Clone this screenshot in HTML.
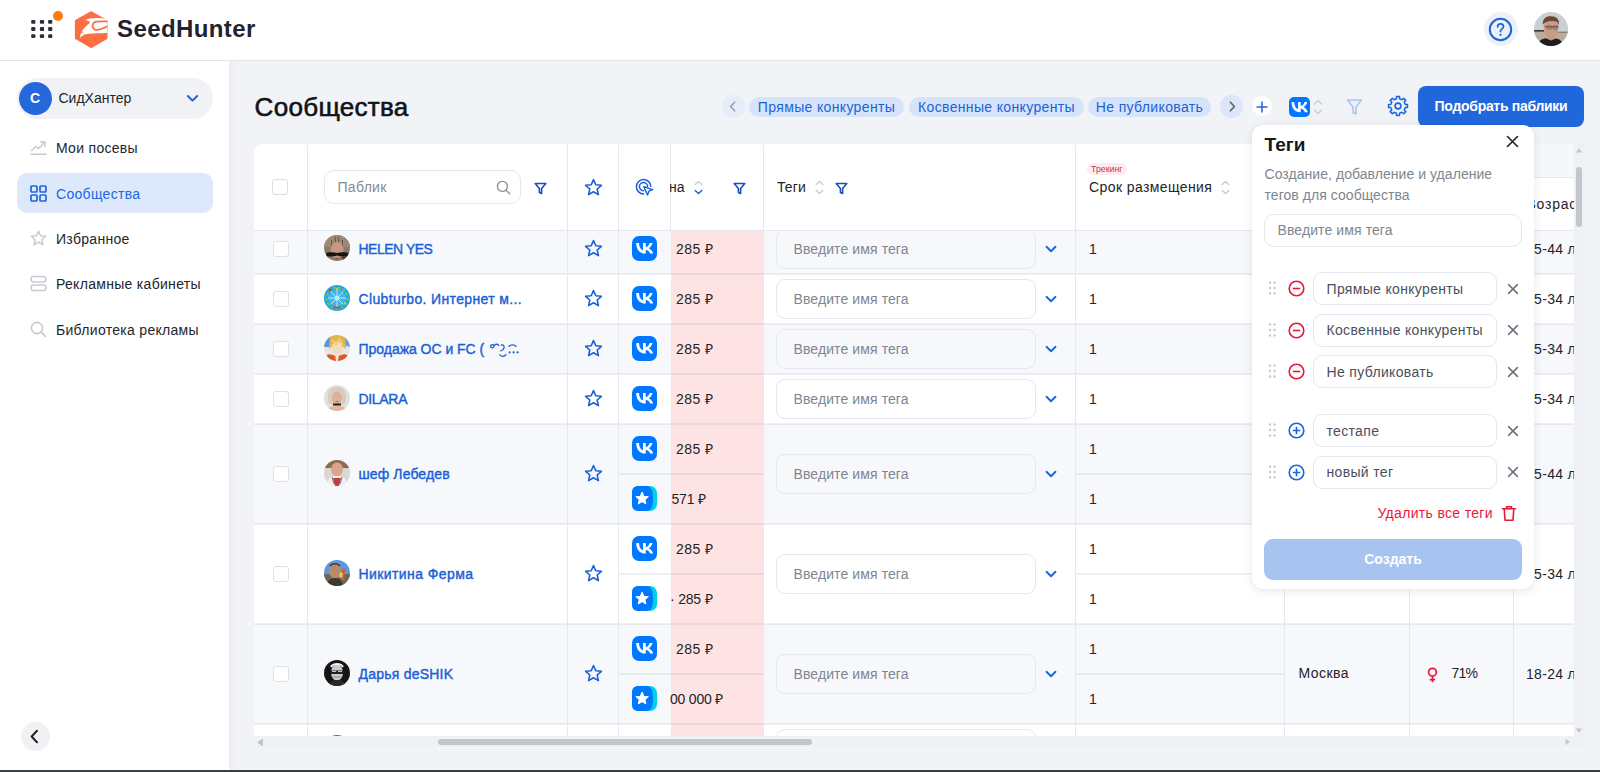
<!DOCTYPE html>
<html><head><meta charset="utf-8">
<style>
*{box-sizing:border-box;margin:0;padding:0}
html,body{width:1600px;height:772px;overflow:hidden;background:#fff}
body{position:relative;font-family:"Liberation Sans",sans-serif;font-size:14px;color:#1f2329}
.a{position:absolute}
.t{position:absolute;white-space:nowrap;line-height:16px}
svg{display:block}
#hdr{left:0;top:0;width:1600px;height:61px;background:#fff;border-bottom:1px solid #e1e5eb}
#side{left:0;top:61px;width:229px;height:709px;background:#fff}
#main{left:229px;top:61px;width:1371px;height:709px;background:#f2f3f7}
#bot{left:0;top:770px;width:1600px;height:2px;background:#3b3e43}
.nav{position:absolute;left:17px;width:196px;height:40px;border-radius:10px}
.nav .ic{position:absolute;left:13px;top:12px;width:17px;height:17px}
.nav .tx{position:absolute;left:39px;top:12.7px;line-height:16px;white-space:nowrap;font-size:14px;color:#22262c;letter-spacing:0.3px}
.chip{position:absolute;top:97px;height:20px;border-radius:10px;background:#d5e4fb;color:#1c62d6;font-size:14px;line-height:20px;text-align:center;letter-spacing:0.35px;white-space:nowrap}
</style></head><body>

<!-- HEADER -->
<div id="hdr" class="a">
  <svg class="a" style="left:30px;top:19px" width="24" height="20" viewBox="0 0 24 20">
    <g fill="#2b303b">
      <rect x="1.2" y="1" width="4.2" height="3.8" rx="1"/><rect x="9.9" y="1" width="4.2" height="3.8" rx="1"/><rect x="18.1" y="1" width="4.2" height="3.8" rx="1"/>
      <rect x="1.2" y="8.1" width="4.2" height="3.8" rx="1"/><rect x="9.9" y="8.1" width="4.2" height="3.8" rx="1"/><rect x="18.1" y="8.1" width="4.2" height="3.8" rx="1"/>
      <rect x="1.2" y="15.2" width="4.2" height="3.8" rx="1"/><rect x="9.9" y="15.2" width="4.2" height="3.8" rx="1"/><rect x="18.1" y="15.2" width="4.2" height="3.8" rx="1"/>
    </g>
  </svg>
  <div class="a" style="left:52.5px;top:11px;width:10px;height:10px;border-radius:50%;background:#ff7b0a"></div>
  <svg class="a" style="left:74px;top:10px" width="35" height="39" viewBox="0 0 35 39">
    <path d="M17.2 1.9 L32.7 10.6 L32.7 28.2 L17.2 37.3 L1.7 28.2 L1.7 10.6 Z" fill="#fd6e43" stroke="#fd6e43" stroke-width="1.6" stroke-linejoin="round"/>
    <path d="M6 27.8 C6.3 23 9 18.5 16 12.8 L15 11.2 L11.2 10 C15 8 22 7.2 32.4 8.8 L33.3 9.8 L33.3 23 C26 23.2 18 23.2 13 24 C10 24.6 7.5 26 6 27.8 Z" fill="#fff"/>
    <path d="M33.3 11.4 C28 11.3 23.5 11.4 21.9 11.7 C18 13 17.5 17.5 20.8 19.6 C23.5 20.5 28 19 33.3 16.2" fill="none" stroke="#fd6e43" stroke-width="1.8"/>
    <circle cx="8.2" cy="22.3" r="0.7" fill="#fd6e43"/>
  </svg>
  <div class="t" style="left:117px;top:15px;font-size:24px;line-height:28px;font-weight:700;color:#1f2430;letter-spacing:0.4px">SeedHunter</div>

  <div class="a" style="left:1483.5px;top:12px;width:34px;height:34px;border-radius:50%;background:#edf1f7"></div>
  <svg class="a" style="left:1488px;top:17px" width="25" height="25" viewBox="0 0 25 25">
    <circle cx="12.5" cy="12.5" r="10.7" fill="none" stroke="#1a66e0" stroke-width="2"/>
    <path d="M9.6 9.9 C9.6 8.1 10.9 6.9 12.6 6.9 C14.3 6.9 15.5 8.1 15.5 9.6 C15.5 11.3 14.2 11.8 13.3 12.5 C12.7 13 12.5 13.5 12.5 14.6" fill="none" stroke="#1a66e0" stroke-width="1.7" stroke-linecap="round"/>
    <circle cx="12.5" cy="17.8" r="1.15" fill="#1a66e0"/>
  </svg>
  <svg class="a" style="left:1533.5px;top:12px" width="34" height="34" viewBox="0 0 34 34"><defs><clipPath id="hav"><circle cx="17" cy="17" r="17"/></clipPath></defs><g clip-path="url(#hav)">
    <rect width="34" height="34" fill="#c9d0d3"/><rect y="19" width="34" height="15" fill="#b9ad9c"/><rect y="18" width="10" height="1.6" fill="#3a3a36"/><rect x="22" y="20" width="12" height="1" fill="#8e867a"/>
    <path d="M11 26 H22 V30 H11 Z" fill="#c29580"/>
    <path d="M9.5 12 C9 6 13 4.5 17 4.6 C22 4.6 25 7 24.6 12 L24 18 C23.5 24 20.5 26.5 17 26.5 C13 26.5 10.5 23 10 18 Z" fill="#c99c86"/>
    <path d="M8.8 12.5 C8.5 6.5 12 4 17 4.2 C22.5 4.4 25.5 7 25 13 C24 9.5 21 8.8 17.5 9 C13.5 9.2 10.5 10 8.8 12.5 Z" fill="#6a4a36"/>
    <path d="M11 14.8 H24.5" stroke="#5a4a48" stroke-width="0.9"/><rect x="13" y="14" width="4.5" height="3" rx="1" fill="none" stroke="#5a4a48" stroke-width="0.7"/><rect x="19" y="14" width="4.5" height="3" rx="1" fill="none" stroke="#5a4a48" stroke-width="0.7"/>
    <path d="M3 34 C4 29 8 26.5 12 26.5 L17 28.5 L22 26.5 C26 27 28 29 29 34 Z" fill="#1e1f1e"/>
  </g></svg>
</div>

<!-- SIDEBAR -->
<div id="side" class="a">
  <div class="a" style="left:17px;top:17px;width:196px;height:41px;border-radius:21px;background:#f1f2f6"></div>
  <div class="a" style="left:18.5px;top:20.5px;width:33px;height:33px;border-radius:50%;background:#2468dc;color:#fff;font-weight:700;font-size:14px;line-height:33px;text-align:center">C</div>
  <div class="t" style="left:58.5px;top:29px;font-size:14px;color:#22262c">СидХантер</div>
  <svg class="a" style="left:186px;top:33px" width="13" height="9" viewBox="0 0 13 9"><path d="M1.8 2 L6.5 6.6 L11.2 2" fill="none" stroke="#1a66e0" stroke-width="2" stroke-linecap="round" stroke-linejoin="round"/></svg>

  <div class="nav" style="top:66px">
    <svg class="ic" viewBox="0 0 17 17"><path d="M1.5 11.5 L6 7.5 L8.5 9.5 L14.5 3.5 M10.5 3 L15 3 L15 7.5" fill="none" stroke="#c7cad0" stroke-width="1.5" stroke-linecap="round" stroke-linejoin="round"/><path d="M0.8 15.2 H16" stroke="#c7cad0" stroke-width="1.6" stroke-linecap="round"/></svg>
    <div class="tx">Мои посевы</div>
  </div>
  <div class="nav" style="top:112px;background:#dde9fb">
    <svg class="ic" viewBox="0 0 17 17"><g fill="none" stroke="#1f66dc" stroke-width="1.7"><rect x="1" y="1" width="6" height="6" rx="1"/><rect x="10" y="1" width="6" height="6" rx="1"/><rect x="1" y="10" width="6" height="6" rx="1"/><rect x="10" y="10" width="6" height="6" rx="1"/></g></svg>
    <div class="tx" style="color:#2268de">Сообщества</div>
  </div>
  <div class="nav" style="top:157px">
    <svg class="ic" viewBox="0 0 17 17"><path d="M8.5 1.2 L10.6 5.8 L15.6 6.3 L11.9 9.7 L12.9 14.8 L8.5 12.2 L4.1 14.8 L5.1 9.7 L1.4 6.3 L6.4 5.8 Z" fill="none" stroke="#c7cad0" stroke-width="1.5" stroke-linejoin="round"/></svg>
    <div class="tx">Избранное</div>
  </div>
  <div class="nav" style="top:202px">
    <svg class="ic" viewBox="0 0 17 17"><g fill="none" stroke="#c7cad0" stroke-width="1.6"><rect x="1.2" y="1.5" width="14.6" height="5.5" rx="2.2"/><rect x="1.2" y="10" width="14.6" height="5.5" rx="2.2"/></g></svg>
    <div class="tx">Рекламные кабинеты</div>
  </div>
  <div class="nav" style="top:248px">
    <svg class="ic" viewBox="0 0 17 17"><circle cx="7" cy="7" r="5.6" fill="none" stroke="#c7cad0" stroke-width="1.6"/><path d="M11.2 11.2 L15.5 15.5" stroke="#c7cad0" stroke-width="1.7" stroke-linecap="round"/></svg>
    <div class="tx">Библиотека рекламы</div>
  </div>

  <div class="a" style="left:21px;top:661px;width:29px;height:29px;border-radius:50%;background:#f1f1f3"></div>
  <svg class="a" style="left:28px;top:668px" width="14" height="15" viewBox="0 0 14 15"><path d="M9 1.8 L3.6 7.5 L9 13.2" fill="none" stroke="#1f2329" stroke-width="2" stroke-linecap="round" stroke-linejoin="round"/></svg>
</div>

<!-- MAIN -->
<div id="main" class="a">
  <div class="a" style="left:0;top:0;width:9px;height:709px;background:linear-gradient(90deg,rgba(0,0,0,0.025),rgba(0,0,0,0))"></div>
</div>
<div class="t" style="left:254.6px;top:92px;font-size:26px;line-height:30px;color:#111418;-webkit-text-stroke:0.6px #111418;letter-spacing:0.3px">Сообщества</div>

<!-- TOOLBAR -->
<div class="a" style="left:721.5px;top:95px;width:23px;height:23px;border-radius:50%;background:#e6edf8"></div>
<svg class="a" style="left:727px;top:100px" width="12" height="13" viewBox="0 0 12 13"><path d="M7.6 2.2 L3.6 6.5 L7.6 10.8" fill="none" stroke="#9aa1ab" stroke-width="1.6" stroke-linecap="round" stroke-linejoin="round"/></svg>
<div class="chip" style="left:749px;width:155px">Прямые конкуренты</div>
<div class="chip" style="left:909px;width:175px">Косвенные конкуренты</div>
<div class="chip" style="left:1088px;width:123px">Не публиковать</div>
<div class="a" style="left:1220px;top:95px;width:23px;height:23px;border-radius:50%;background:#dbe6f8"></div>
<svg class="a" style="left:1225.7px;top:100px" width="12" height="13" viewBox="0 0 12 13"><path d="M4.4 2.2 L8.4 6.5 L4.4 10.8" fill="none" stroke="#5b6068" stroke-width="1.6" stroke-linecap="round" stroke-linejoin="round"/></svg>
<div class="a" style="left:1252px;top:96px;width:20px;height:20px;border-radius:50%;background:#fff"></div>
<svg class="a" style="left:1256px;top:100.5px" width="12" height="12" viewBox="0 0 12 12"><path d="M6 1.1 V10.9 M1.1 6 H10.9" stroke="#1a66e0" stroke-width="1.5" stroke-linecap="round"/></svg>
<svg class="a" style="left:1289px;top:97px" width="21" height="20" viewBox="0 0 21 20"><rect width="21" height="20" rx="5" fill="#0077ff"/><path transform="translate(-1.5,-2) scale(1)" d="M12.9 17.2c-5.6 0-8.8-3.8-8.9-10.2h2.8c.1 4.7 2.2 6.7 3.8 7.1V7h2.6v4c1.6-.2 3.3-2 3.9-4h2.6c-.4 2.5-2.3 4.3-3.6 5.1 1.3.6 3.4 2.2 4.2 5.1h-2.9c-.6-1.9-2.2-3.4-4.2-3.6v3.6h-.3z" fill="#fff"/></svg>
<svg class="a" style="left:1313px;top:99px" width="10" height="16" viewBox="0 0 10 16"><path d="M1.5 5 L5 1.5 L8.5 5 M1.5 11 L5 14.5 L8.5 11" fill="none" stroke="#c8ccd2" stroke-width="1.4" stroke-linecap="round" stroke-linejoin="round"/></svg>
<svg class="a" style="left:1346px;top:98px" width="17" height="18" viewBox="0 0 17 18"><path d="M1.5 2 H15.5 L10 9 V16 L7 14.8 V9 Z" fill="none" stroke="#a8c5f2" stroke-width="1.6" stroke-linejoin="round"/></svg>
<svg class="a" style="left:1387px;top:95px" width="22" height="22" viewBox="0 0 22 22"><path d="M18.24 9.46 L20.48 9.50 L20.48 12.50 L18.24 12.54 L17.21 15.03 L18.77 16.64 L16.64 18.77 L15.03 17.21 L12.54 18.24 L12.50 20.48 L9.50 20.48 L9.46 18.24 L6.97 17.21 L5.36 18.77 L3.23 16.64 L4.79 15.03 L3.76 12.54 L1.52 12.50 L1.52 9.50 L3.76 9.46 L4.79 6.97 L3.23 5.36 L5.36 3.23 L6.97 4.79 L9.46 3.76 L9.50 1.52 L12.50 1.52 L12.54 3.76 L15.03 4.79 L16.64 3.23 L18.77 5.36 L17.21 6.97 Z" fill="none" stroke="#1a66e0" stroke-width="1.5" stroke-linejoin="round"/><circle cx="11" cy="11" r="2.9" fill="none" stroke="#1a66e0" stroke-width="1.6"/></svg>
<div class="a" style="left:1418px;top:86px;width:166px;height:41px;border-radius:8px;background:#2167dc;color:#fff;font-weight:700;font-size:14px;line-height:41px;text-align:center;letter-spacing:-0.3px">Подобрать паблики</div>

<div class="a" style="left:254px;top:144px;width:1320px;height:592px;overflow:hidden;border-radius:10px 0 0 0;background:#fff">
<div class="a" style="left:-254px;top:-144px;width:1600px;height:772px">
<div class="a" style="left:254px;top:224px;width:1320px;height:50px;background:#f7f8fb"></div>
<div class="a" style="left:671px;top:224px;width:92px;height:50px;background:#fde3e3"></div>
<div class="a" style="left:273px;top:240.5px;width:16px;height:16px;border:1.5px solid #dce1e8;border-radius:3px;background:#fff"></div>
<svg class="a" style="left:324px;top:235.0px" width="26" height="26" viewBox="0 0 26 26"><defs><clipPath id="c0"><circle cx="13" cy="13" r="13"/></clipPath></defs><g clip-path="url(#c0)"><rect width="26" height="26" fill="#8f7a66"/><path d="M0 0 H26 V12 H0 Z" fill="#9c8a76"/><path d="M11.3 2 V10 M14.7 2 V10 M7.5 5 V13 M18.5 5 V13" stroke="#5e4d3e" stroke-width="0.9"/><ellipse cx="13" cy="15" rx="6.5" ry="8" fill="#c49a80"/><path d="M2 18 C6 16.5 10 17.5 13 18 C16 17.5 20 16.5 25 18 L24 21 C20 22 17 21.5 13 20.5 C9 21.5 6 22 2.5 21 Z" fill="#151515"/><ellipse cx="13" cy="23.5" rx="1.6" ry="0.8" fill="#9a4a50"/><path d="M18 22 L26 20 V26 H19 Z" fill="#3a3a30"/><path d="M20 24 L24 22 V26 H20 Z" fill="#d6a92a"/><path d="M0 20 L4 22 L3 26 H0 Z" fill="#4a3528"/></g></svg>
<div class="t" style="left:358.5px;top:240.7px;font-size:14px;color:#1a5fd6;font-weight:400;letter-spacing:-0.49px;-webkit-text-stroke:0.4px #1a5fd6">HELEN YES</div>
<svg class="a" style="left:584px;top:239.2px" width="19" height="19" viewBox="0 0 19 19"><path d="M9.5 1.6 L11.8 6.8 L17.4 7.3 L13.2 11 L14.4 16.6 L9.5 13.7 L4.6 16.6 L5.8 11 L1.6 7.3 L7.2 6.8 Z" fill="none" stroke="#1a5fd6" stroke-width="1.6" stroke-linejoin="round"/></svg>
<svg class="a" style="left:632px;top:236.0px" width="25" height="25" viewBox="0 0 25 25"><rect width="25" height="25" rx="7" fill="#0077ff"/><path transform="translate(0.9,-0.5) scale(0.95)" d="M13.162 18.994c-6.098 0-9.57-4.172-9.714-11.114h3.047c.1 5.096 2.352 7.254 4.13 7.7V7.88h2.888v4.395c1.76-.19 3.598-2.192 4.221-4.395h2.888c-.48 2.717-2.49 4.718-3.921 5.54 1.43.665 3.72 2.408 4.591 5.574h-3.178c-.68-2.118-2.375-3.757-4.601-3.98v3.98h-.351z" fill="#fff"/></svg>
<div class="t" style="left:676px;top:240.5px;font-size:14px;color:#1f2329;font-weight:400;letter-spacing:0.45px;">285 ₽</div>
<div class="t" style="left:1089px;top:240.5px;font-size:14px;color:#1f2329;font-weight:400;letter-spacing:0px;">1</div>
<div class="a" style="left:776px;top:228.5px;width:260px;height:40px;border:1px solid #e3e7ee;border-radius:9px;background:#f7f8fb"></div>
<div class="t" style="left:793.5px;top:240.5px;font-size:14px;color:#80868f;font-weight:400;letter-spacing:0.1px;">Введите имя тега</div>
<svg class="a" style="left:1045px;top:244.5px" width="12" height="8" viewBox="0 0 12 8"><path d="M1.5 1.8 L6 6.2 L10.5 1.8" fill="none" stroke="#1a66e0" stroke-width="1.9" stroke-linecap="round" stroke-linejoin="round"/></svg>
<div class="t" style="left:1534.1px;top:240.5px;font-size:14px;color:#1f2329;font-weight:400;letter-spacing:0.3px;">5-44 л</div>
<div class="a" style="left:254px;top:274px;width:1320px;height:50px;background:#fff"></div>
<div class="a" style="left:671px;top:274px;width:92px;height:50px;background:#fde3e3"></div>
<div class="a" style="left:273px;top:290.5px;width:16px;height:16px;border:1.5px solid #dce1e8;border-radius:3px;background:#fff"></div>
<svg class="a" style="left:324px;top:285.0px" width="26" height="26" viewBox="0 0 26 26"><defs><clipPath id="c1"><circle cx="13" cy="13" r="13"/></clipPath></defs><g clip-path="url(#c1)"><rect width="26" height="26" fill="#1fa4ea"/><circle cx="13" cy="13" r="10.5" fill="none" stroke="#69c85a" stroke-width="2.2" stroke-dasharray="3 2"/><circle cx="13" cy="13" r="9" fill="#3cb8f0"/><g stroke="#bfefff" stroke-width="0.9"><path d="M13 4 V22 M4 13 H22 M6.6 6.6 L19.4 19.4 M19.4 6.6 L6.6 19.4"/></g><circle cx="13" cy="13" r="2" fill="none" stroke="#d8f7ff" stroke-width="1"/><circle cx="6" cy="5" r="1.3" fill="#d9302a"/><path d="M9 21.5 C11 23 15 23 17 22" stroke="#e5442a" stroke-width="1.8" fill="none"/><circle cx="21" cy="18" r="1" fill="#e6c74a"/><circle cx="13" cy="3.5" r="0.9" fill="#e6c74a"/></g></svg>
<div class="t" style="left:358.5px;top:290.7px;font-size:14px;color:#1a5fd6;font-weight:400;letter-spacing:0.37px;-webkit-text-stroke:0.4px #1a5fd6">Clubturbo. Интернет м...</div>
<svg class="a" style="left:584px;top:289.2px" width="19" height="19" viewBox="0 0 19 19"><path d="M9.5 1.6 L11.8 6.8 L17.4 7.3 L13.2 11 L14.4 16.6 L9.5 13.7 L4.6 16.6 L5.8 11 L1.6 7.3 L7.2 6.8 Z" fill="none" stroke="#1a5fd6" stroke-width="1.6" stroke-linejoin="round"/></svg>
<svg class="a" style="left:632px;top:286.0px" width="25" height="25" viewBox="0 0 25 25"><rect width="25" height="25" rx="7" fill="#0077ff"/><path transform="translate(0.9,-0.5) scale(0.95)" d="M13.162 18.994c-6.098 0-9.57-4.172-9.714-11.114h3.047c.1 5.096 2.352 7.254 4.13 7.7V7.88h2.888v4.395c1.76-.19 3.598-2.192 4.221-4.395h2.888c-.48 2.717-2.49 4.718-3.921 5.54 1.43.665 3.72 2.408 4.591 5.574h-3.178c-.68-2.118-2.375-3.757-4.601-3.98v3.98h-.351z" fill="#fff"/></svg>
<div class="t" style="left:676px;top:290.5px;font-size:14px;color:#1f2329;font-weight:400;letter-spacing:0.45px;">285 ₽</div>
<div class="t" style="left:1089px;top:290.5px;font-size:14px;color:#1f2329;font-weight:400;letter-spacing:0px;">1</div>
<div class="a" style="left:776px;top:278.5px;width:260px;height:40px;border:1px solid #e3e7ee;border-radius:9px;background:#fff"></div>
<div class="t" style="left:793.5px;top:290.5px;font-size:14px;color:#80868f;font-weight:400;letter-spacing:0.1px;">Введите имя тега</div>
<svg class="a" style="left:1045px;top:294.5px" width="12" height="8" viewBox="0 0 12 8"><path d="M1.5 1.8 L6 6.2 L10.5 1.8" fill="none" stroke="#1a66e0" stroke-width="1.9" stroke-linecap="round" stroke-linejoin="round"/></svg>
<div class="t" style="left:1534.1px;top:290.5px;font-size:14px;color:#1f2329;font-weight:400;letter-spacing:0.3px;">5-34 л</div>
<div class="a" style="left:254px;top:324px;width:1320px;height:50px;background:#f7f8fb"></div>
<div class="a" style="left:671px;top:324px;width:92px;height:50px;background:#fde3e3"></div>
<div class="a" style="left:273px;top:340.5px;width:16px;height:16px;border:1.5px solid #dce1e8;border-radius:3px;background:#fff"></div>
<svg class="a" style="left:324px;top:335.0px" width="26" height="26" viewBox="0 0 26 26"><defs><clipPath id="c2"><circle cx="13" cy="13" r="13"/></clipPath></defs><g clip-path="url(#c2)"><rect width="26" height="26" fill="#e8e6e0"/><path d="M0 0 H8 L6 12 H0 Z" fill="#5a93d8"/><path d="M18 0 H26 V12 L20 10 Z" fill="#6aa0dc"/><path d="M6 2 C9 -1 18 -1 21 3 L22 14 C19 10 8 10 5 14 Z" fill="#e3b550"/><ellipse cx="13" cy="13" rx="5.5" ry="6.5" fill="#f0dcc0"/><path d="M8 5 L12 10 L15 4 L19 10" stroke="#f2cf6a" stroke-width="1.6" fill="none"/><path d="M3 20 C6 18 9 21 13 21 C17 21 20 18 23 20 L26 26 H0 Z" fill="#dd5a28"/><path d="M11 19 H15 L14 26 H12 Z" fill="#efe6d8"/></g></svg>
<div class="t" style="left:358.5px;top:340.7px;font-size:14px;color:#1a5fd6;font-weight:400;letter-spacing:-0.03px;-webkit-text-stroke:0.4px #1a5fd6">Продажа ОС и FC (</div>
<svg class="a" style="left:486px;top:340.5px" width="40" height="18" viewBox="0 0 40 18"><g fill="none" stroke="#1a5fd6" stroke-width="1.3" stroke-linecap="round"><circle cx="6.3" cy="5.2" r="1.6"/><path d="M8.5 4.2 C10 2.8 11.5 3 13 4.4"/><path d="M15.5 4 C17.5 3.6 18.5 5 18 7 C17.6 8.6 16.2 9.5 14.8 10"/><path d="M13.8 13.8 C15.5 15.8 18.5 15.8 20 13.6"/><path d="M23 5.4 C24.5 3.3 28.5 3.3 30 5.4"/></g><g fill="#1a5fd6"><circle cx="23.6" cy="11.3" r="1.1"/><circle cx="27.6" cy="11.3" r="1.1"/><circle cx="31.6" cy="11.3" r="1.1"/></g></svg>
<svg class="a" style="left:584px;top:339.2px" width="19" height="19" viewBox="0 0 19 19"><path d="M9.5 1.6 L11.8 6.8 L17.4 7.3 L13.2 11 L14.4 16.6 L9.5 13.7 L4.6 16.6 L5.8 11 L1.6 7.3 L7.2 6.8 Z" fill="none" stroke="#1a5fd6" stroke-width="1.6" stroke-linejoin="round"/></svg>
<svg class="a" style="left:632px;top:336.0px" width="25" height="25" viewBox="0 0 25 25"><rect width="25" height="25" rx="7" fill="#0077ff"/><path transform="translate(0.9,-0.5) scale(0.95)" d="M13.162 18.994c-6.098 0-9.57-4.172-9.714-11.114h3.047c.1 5.096 2.352 7.254 4.13 7.7V7.88h2.888v4.395c1.76-.19 3.598-2.192 4.221-4.395h2.888c-.48 2.717-2.49 4.718-3.921 5.54 1.43.665 3.72 2.408 4.591 5.574h-3.178c-.68-2.118-2.375-3.757-4.601-3.98v3.98h-.351z" fill="#fff"/></svg>
<div class="t" style="left:676px;top:340.5px;font-size:14px;color:#1f2329;font-weight:400;letter-spacing:0.45px;">285 ₽</div>
<div class="t" style="left:1089px;top:340.5px;font-size:14px;color:#1f2329;font-weight:400;letter-spacing:0px;">1</div>
<div class="a" style="left:776px;top:328.5px;width:260px;height:40px;border:1px solid #e3e7ee;border-radius:9px;background:#f7f8fb"></div>
<div class="t" style="left:793.5px;top:340.5px;font-size:14px;color:#80868f;font-weight:400;letter-spacing:0.1px;">Введите имя тега</div>
<svg class="a" style="left:1045px;top:344.5px" width="12" height="8" viewBox="0 0 12 8"><path d="M1.5 1.8 L6 6.2 L10.5 1.8" fill="none" stroke="#1a66e0" stroke-width="1.9" stroke-linecap="round" stroke-linejoin="round"/></svg>
<div class="t" style="left:1534.1px;top:340.5px;font-size:14px;color:#1f2329;font-weight:400;letter-spacing:0.3px;">5-34 л</div>
<div class="a" style="left:254px;top:374px;width:1320px;height:50px;background:#fff"></div>
<div class="a" style="left:671px;top:374px;width:92px;height:50px;background:#fde3e3"></div>
<div class="a" style="left:273px;top:390.5px;width:16px;height:16px;border:1.5px solid #dce1e8;border-radius:3px;background:#fff"></div>
<svg class="a" style="left:324px;top:385.0px" width="26" height="26" viewBox="0 0 26 26"><defs><clipPath id="c3"><circle cx="13" cy="13" r="13"/></clipPath></defs><g clip-path="url(#c3)"><rect width="26" height="26" fill="#e2e0de"/><path d="M4 14 C3 5 8 2 13 2 C18 2 23 5 22 14 L21 19 H5 Z" fill="#d9cbbf"/><ellipse cx="13" cy="13" rx="5" ry="6.5" fill="#dcb09c"/><path d="M11.5 16.5 H14.5" stroke="#b86a6a" stroke-width="1.1"/><path d="M9 19.5 H17" stroke="#1a1a1a" stroke-width="1.8"/><path d="M3 26 C4 22 8 21 13 21 C18 21 22 22 23 26 Z" fill="#e2b49e"/></g></svg>
<div class="t" style="left:358.5px;top:390.7px;font-size:14px;color:#1a5fd6;font-weight:400;letter-spacing:-0.32px;-webkit-text-stroke:0.4px #1a5fd6">DILARA</div>
<svg class="a" style="left:584px;top:389.2px" width="19" height="19" viewBox="0 0 19 19"><path d="M9.5 1.6 L11.8 6.8 L17.4 7.3 L13.2 11 L14.4 16.6 L9.5 13.7 L4.6 16.6 L5.8 11 L1.6 7.3 L7.2 6.8 Z" fill="none" stroke="#1a5fd6" stroke-width="1.6" stroke-linejoin="round"/></svg>
<svg class="a" style="left:632px;top:386.0px" width="25" height="25" viewBox="0 0 25 25"><rect width="25" height="25" rx="7" fill="#0077ff"/><path transform="translate(0.9,-0.5) scale(0.95)" d="M13.162 18.994c-6.098 0-9.57-4.172-9.714-11.114h3.047c.1 5.096 2.352 7.254 4.13 7.7V7.88h2.888v4.395c1.76-.19 3.598-2.192 4.221-4.395h2.888c-.48 2.717-2.49 4.718-3.921 5.54 1.43.665 3.72 2.408 4.591 5.574h-3.178c-.68-2.118-2.375-3.757-4.601-3.98v3.98h-.351z" fill="#fff"/></svg>
<div class="t" style="left:676px;top:390.5px;font-size:14px;color:#1f2329;font-weight:400;letter-spacing:0.45px;">285 ₽</div>
<div class="t" style="left:1089px;top:390.5px;font-size:14px;color:#1f2329;font-weight:400;letter-spacing:0px;">1</div>
<div class="a" style="left:776px;top:378.5px;width:260px;height:40px;border:1px solid #e3e7ee;border-radius:9px;background:#fff"></div>
<div class="t" style="left:793.5px;top:390.5px;font-size:14px;color:#80868f;font-weight:400;letter-spacing:0.1px;">Введите имя тега</div>
<svg class="a" style="left:1045px;top:394.5px" width="12" height="8" viewBox="0 0 12 8"><path d="M1.5 1.8 L6 6.2 L10.5 1.8" fill="none" stroke="#1a66e0" stroke-width="1.9" stroke-linecap="round" stroke-linejoin="round"/></svg>
<div class="t" style="left:1534.1px;top:390.5px;font-size:14px;color:#1f2329;font-weight:400;letter-spacing:0.3px;">5-34 л</div>
<div class="a" style="left:254px;top:424px;width:1320px;height:100px;background:#f7f8fb"></div>
<div class="a" style="left:671px;top:424px;width:92px;height:100px;background:#fde3e3"></div>
<div class="a" style="left:273px;top:465.5px;width:16px;height:16px;border:1.5px solid #dce1e8;border-radius:3px;background:#fff"></div>
<svg class="a" style="left:324px;top:460.0px" width="26" height="26" viewBox="0 0 26 26"><defs><clipPath id="c4"><circle cx="13" cy="13" r="13"/></clipPath></defs><g clip-path="url(#c4)"><rect width="26" height="26" fill="#d9d7d2"/><path d="M0 0 H26 V8 H0 Z" fill="#8a6d50"/><ellipse cx="13" cy="9.5" rx="6" ry="7" fill="#dba48c"/><path d="M3 26 C3 18 7 16 13 16 C19 16 23 18 23 26 Z" fill="#f1f0ee"/><path d="M9 18 L11 26 H15 L17 18 Z" fill="#c93b37"/><path d="M8 17 L10 24 M18 17 L16 24" stroke="#2a5a9a" stroke-width="0.8"/></g></svg>
<div class="t" style="left:358.5px;top:465.7px;font-size:14px;color:#1a5fd6;font-weight:400;letter-spacing:0.11px;-webkit-text-stroke:0.4px #1a5fd6">шеф Лебедев</div>
<svg class="a" style="left:584px;top:464.2px" width="19" height="19" viewBox="0 0 19 19"><path d="M9.5 1.6 L11.8 6.8 L17.4 7.3 L13.2 11 L14.4 16.6 L9.5 13.7 L4.6 16.6 L5.8 11 L1.6 7.3 L7.2 6.8 Z" fill="none" stroke="#1a5fd6" stroke-width="1.6" stroke-linejoin="round"/></svg>
<svg class="a" style="left:632px;top:436.0px" width="25" height="25" viewBox="0 0 25 25"><rect width="25" height="25" rx="7" fill="#0077ff"/><path transform="translate(0.9,-0.5) scale(0.95)" d="M13.162 18.994c-6.098 0-9.57-4.172-9.714-11.114h3.047c.1 5.096 2.352 7.254 4.13 7.7V7.88h2.888v4.395c1.76-.19 3.598-2.192 4.221-4.395h2.888c-.48 2.717-2.49 4.718-3.921 5.54 1.43.665 3.72 2.408 4.591 5.574h-3.178c-.68-2.118-2.375-3.757-4.601-3.98v3.98h-.351z" fill="#fff"/></svg>
<div class="t" style="left:676px;top:440.5px;font-size:14px;color:#1f2329;font-weight:400;letter-spacing:0.45px;">285 ₽</div>
<div class="t" style="left:1089px;top:440.5px;font-size:14px;color:#1f2329;font-weight:400;letter-spacing:0px;">1</div>
<svg class="a" style="left:632px;top:486.0px" width="25" height="25" viewBox="0 0 25 25"><rect width="25" height="25" rx="7" fill="#00d1e4"/><path d="M7 0 H13.5 C19.5 0 21 4 21 12.5 C21 21 19.5 25 13.5 25 H7 C2 25 0 23 0 18 V7 C0 2 2 0 7 0 Z" fill="#0077ff"/><path d="M10.10 6.30 L11.80 10.25 L16.09 10.65 L12.86 13.50 L13.80 17.70 L10.10 15.50 L6.40 17.70 L7.34 13.50 L4.11 10.65 L8.40 10.25 Z" fill="#fff" stroke="#fff" stroke-width="1.1" stroke-linejoin="round"/></svg>
<div class="t" style="left:671.5px;top:490.5px;font-size:14px;color:#1f2329;font-weight:400;letter-spacing:-0.2px;">571 ₽</div>
<div class="t" style="left:1089px;top:490.5px;font-size:14px;color:#1f2329;font-weight:400;letter-spacing:0px;">1</div>
<div class="a" style="left:776px;top:453.5px;width:260px;height:40px;border:1px solid #e3e7ee;border-radius:9px;background:#f7f8fb"></div>
<div class="t" style="left:793.5px;top:465.5px;font-size:14px;color:#80868f;font-weight:400;letter-spacing:0.1px;">Введите имя тега</div>
<svg class="a" style="left:1045px;top:469.5px" width="12" height="8" viewBox="0 0 12 8"><path d="M1.5 1.8 L6 6.2 L10.5 1.8" fill="none" stroke="#1a66e0" stroke-width="1.9" stroke-linecap="round" stroke-linejoin="round"/></svg>
<div class="t" style="left:1534.1px;top:465.5px;font-size:14px;color:#1f2329;font-weight:400;letter-spacing:0.3px;">5-44 л</div>
<div class="a" style="left:254px;top:524px;width:1320px;height:100px;background:#fff"></div>
<div class="a" style="left:671px;top:524px;width:92px;height:100px;background:#fde3e3"></div>
<div class="a" style="left:273px;top:565.5px;width:16px;height:16px;border:1.5px solid #dce1e8;border-radius:3px;background:#fff"></div>
<svg class="a" style="left:324px;top:560.0px" width="26" height="26" viewBox="0 0 26 26"><defs><clipPath id="c5"><circle cx="13" cy="13" r="13"/></clipPath></defs><g clip-path="url(#c5)"><rect width="26" height="26" fill="#5b98de"/><path d="M0 14 H26 V26 H0 Z" fill="#6a6a52"/><ellipse cx="11" cy="11" rx="6" ry="7.5" fill="#b9896a"/><path d="M6 6 C8 3 14 3 16 6" stroke="#4a3a2c" stroke-width="1.6" fill="none"/><path d="M17 14 C18 9 20 7 21 9 L20 20 L17 20 Z" fill="#e0562a"/><path d="M2 26 C3 20 7 18 11 18 C15 18 18 20 19 26 Z" fill="#3f3a2e"/><path d="M16 12 L19 13 L18 18 L15 17 Z" fill="#e7c46a"/></g></svg>
<div class="t" style="left:358.5px;top:565.7px;font-size:14px;color:#1a5fd6;font-weight:400;letter-spacing:0.41px;-webkit-text-stroke:0.4px #1a5fd6">Никитина Ферма</div>
<svg class="a" style="left:584px;top:564.2px" width="19" height="19" viewBox="0 0 19 19"><path d="M9.5 1.6 L11.8 6.8 L17.4 7.3 L13.2 11 L14.4 16.6 L9.5 13.7 L4.6 16.6 L5.8 11 L1.6 7.3 L7.2 6.8 Z" fill="none" stroke="#1a5fd6" stroke-width="1.6" stroke-linejoin="round"/></svg>
<svg class="a" style="left:632px;top:536.0px" width="25" height="25" viewBox="0 0 25 25"><rect width="25" height="25" rx="7" fill="#0077ff"/><path transform="translate(0.9,-0.5) scale(0.95)" d="M13.162 18.994c-6.098 0-9.57-4.172-9.714-11.114h3.047c.1 5.096 2.352 7.254 4.13 7.7V7.88h2.888v4.395c1.76-.19 3.598-2.192 4.221-4.395h2.888c-.48 2.717-2.49 4.718-3.921 5.54 1.43.665 3.72 2.408 4.591 5.574h-3.178c-.68-2.118-2.375-3.757-4.601-3.98v3.98h-.351z" fill="#fff"/></svg>
<div class="t" style="left:676px;top:540.5px;font-size:14px;color:#1f2329;font-weight:400;letter-spacing:0.45px;">285 ₽</div>
<div class="t" style="left:1089px;top:540.5px;font-size:14px;color:#1f2329;font-weight:400;letter-spacing:0px;">1</div>
<svg class="a" style="left:632px;top:586.0px" width="25" height="25" viewBox="0 0 25 25"><rect width="25" height="25" rx="7" fill="#00d1e4"/><path d="M7 0 H13.5 C19.5 0 21 4 21 12.5 C21 21 19.5 25 13.5 25 H7 C2 25 0 23 0 18 V7 C0 2 2 0 7 0 Z" fill="#0077ff"/><path d="M10.10 6.30 L11.80 10.25 L16.09 10.65 L12.86 13.50 L13.80 17.70 L10.10 15.50 L6.40 17.70 L7.34 13.50 L4.11 10.65 L8.40 10.25 Z" fill="#fff" stroke="#fff" stroke-width="1.1" stroke-linejoin="round"/></svg>
<div class="t" style="left:670px;top:590.5px;font-size:14px;color:#1f2329;font-weight:400;letter-spacing:-0.2px;">· 285 ₽</div>
<div class="t" style="left:1089px;top:590.5px;font-size:14px;color:#1f2329;font-weight:400;letter-spacing:0px;">1</div>
<div class="a" style="left:776px;top:553.5px;width:260px;height:40px;border:1px solid #e3e7ee;border-radius:9px;background:#fff"></div>
<div class="t" style="left:793.5px;top:565.5px;font-size:14px;color:#80868f;font-weight:400;letter-spacing:0.1px;">Введите имя тега</div>
<svg class="a" style="left:1045px;top:569.5px" width="12" height="8" viewBox="0 0 12 8"><path d="M1.5 1.8 L6 6.2 L10.5 1.8" fill="none" stroke="#1a66e0" stroke-width="1.9" stroke-linecap="round" stroke-linejoin="round"/></svg>
<div class="t" style="left:1534.1px;top:565.5px;font-size:14px;color:#1f2329;font-weight:400;letter-spacing:0.3px;">5-34 л</div>
<div class="a" style="left:254px;top:624px;width:1320px;height:100px;background:#f7f8fb"></div>
<div class="a" style="left:671px;top:624px;width:92px;height:100px;background:#fde3e3"></div>
<div class="a" style="left:273px;top:665.5px;width:16px;height:16px;border:1.5px solid #dce1e8;border-radius:3px;background:#fff"></div>
<svg class="a" style="left:324px;top:660.0px" width="26" height="26" viewBox="0 0 26 26"><defs><clipPath id="c6"><circle cx="13" cy="13" r="13"/></clipPath></defs><g clip-path="url(#c6)"><rect width="26" height="26" fill="#141414"/><ellipse cx="13" cy="12.5" rx="6" ry="8" fill="#c9c9c9"/><path d="M7 7 C9 3 17 3 19 7" stroke="#efefef" stroke-width="2" fill="none"/><path d="M6.5 10.5 H19.5 L19 14 H7 Z" fill="#222"/><path d="M8 11.5 H12 M14 11.5 H18" stroke="#eee" stroke-width="0.8"/><path d="M9 17 H17" stroke="#8a8a8a" stroke-width="1"/><path d="M4 26 C5 21 9 20 13 20 C17 20 21 21 22 26 Z" fill="#2a2a2a"/></g></svg>
<div class="t" style="left:358.5px;top:665.7px;font-size:14px;color:#1a5fd6;font-weight:400;letter-spacing:0.22px;-webkit-text-stroke:0.4px #1a5fd6">Дарья deSHIK</div>
<svg class="a" style="left:584px;top:664.2px" width="19" height="19" viewBox="0 0 19 19"><path d="M9.5 1.6 L11.8 6.8 L17.4 7.3 L13.2 11 L14.4 16.6 L9.5 13.7 L4.6 16.6 L5.8 11 L1.6 7.3 L7.2 6.8 Z" fill="none" stroke="#1a5fd6" stroke-width="1.6" stroke-linejoin="round"/></svg>
<svg class="a" style="left:632px;top:636.0px" width="25" height="25" viewBox="0 0 25 25"><rect width="25" height="25" rx="7" fill="#0077ff"/><path transform="translate(0.9,-0.5) scale(0.95)" d="M13.162 18.994c-6.098 0-9.57-4.172-9.714-11.114h3.047c.1 5.096 2.352 7.254 4.13 7.7V7.88h2.888v4.395c1.76-.19 3.598-2.192 4.221-4.395h2.888c-.48 2.717-2.49 4.718-3.921 5.54 1.43.665 3.72 2.408 4.591 5.574h-3.178c-.68-2.118-2.375-3.757-4.601-3.98v3.98h-.351z" fill="#fff"/></svg>
<div class="t" style="left:676px;top:640.5px;font-size:14px;color:#1f2329;font-weight:400;letter-spacing:0.45px;">285 ₽</div>
<div class="t" style="left:1089px;top:640.5px;font-size:14px;color:#1f2329;font-weight:400;letter-spacing:0px;">1</div>
<svg class="a" style="left:632px;top:686.0px" width="25" height="25" viewBox="0 0 25 25"><rect width="25" height="25" rx="7" fill="#00d1e4"/><path d="M7 0 H13.5 C19.5 0 21 4 21 12.5 C21 21 19.5 25 13.5 25 H7 C2 25 0 23 0 18 V7 C0 2 2 0 7 0 Z" fill="#0077ff"/><path d="M10.10 6.30 L11.80 10.25 L16.09 10.65 L12.86 13.50 L13.80 17.70 L10.10 15.50 L6.40 17.70 L7.34 13.50 L4.11 10.65 L8.40 10.25 Z" fill="#fff" stroke="#fff" stroke-width="1.1" stroke-linejoin="round"/></svg>
<div class="t" style="left:670px;top:690.5px;font-size:14px;color:#1f2329;font-weight:400;letter-spacing:-0.2px;">00 000 ₽</div>
<div class="t" style="left:1089px;top:690.5px;font-size:14px;color:#1f2329;font-weight:400;letter-spacing:0px;">1</div>
<div class="a" style="left:776px;top:653.5px;width:260px;height:40px;border:1px solid #e3e7ee;border-radius:9px;background:#f7f8fb"></div>
<div class="t" style="left:793.5px;top:665.5px;font-size:14px;color:#80868f;font-weight:400;letter-spacing:0.1px;">Введите имя тега</div>
<svg class="a" style="left:1045px;top:669.5px" width="12" height="8" viewBox="0 0 12 8"><path d="M1.5 1.8 L6 6.2 L10.5 1.8" fill="none" stroke="#1a66e0" stroke-width="1.9" stroke-linecap="round" stroke-linejoin="round"/></svg>
<div class="t" style="left:1298.5px;top:665.0px;font-size:14px;color:#1f2329;font-weight:400;letter-spacing:0.45px;">Москва</div>
<svg class="a" style="left:1426px;top:666.5px" width="13" height="16" viewBox="0 0 13 16"><circle cx="6.5" cy="5.2" r="3.9" fill="none" stroke="#e8173a" stroke-width="1.7"/><path d="M6.5 9 V15.2 M3.8 12.6 H9.2" stroke="#e8173a" stroke-width="1.7"/></svg>
<div class="t" style="left:1451.5px;top:665.0px;font-size:14px;color:#1f2329;font-weight:400;letter-spacing:-0.8px;">71%</div>
<div class="t" style="left:1526px;top:665.5px;font-size:14px;color:#1f2329;font-weight:400;letter-spacing:0.3px;">18-24 л</div>
<div class="a" style="left:254px;top:724px;width:1320px;height:50px;background:#fff"></div>
<div class="a" style="left:671px;top:724px;width:92px;height:50px;background:#fde3e3"></div>
<div class="a" style="left:273px;top:740.5px;width:16px;height:16px;border:1.5px solid #dce1e8;border-radius:3px;background:#fff"></div>
<svg class="a" style="left:324px;top:735.0px" width="26" height="26" viewBox="0 0 26 26"><defs><clipPath id="c7"><circle cx="13" cy="13" r="13"/></clipPath></defs><g clip-path="url(#c7)"><rect width="26" height="26" fill="#e8353a"/></g></svg>
<svg class="a" style="left:584px;top:739.2px" width="19" height="19" viewBox="0 0 19 19"><path d="M9.5 1.6 L11.8 6.8 L17.4 7.3 L13.2 11 L14.4 16.6 L9.5 13.7 L4.6 16.6 L5.8 11 L1.6 7.3 L7.2 6.8 Z" fill="none" stroke="#1a5fd6" stroke-width="1.6" stroke-linejoin="round"/></svg>
<svg class="a" style="left:632px;top:736.0px" width="25" height="25" viewBox="0 0 25 25"><rect width="25" height="25" rx="7" fill="#0077ff"/><path transform="translate(0.9,-0.5) scale(0.95)" d="M13.162 18.994c-6.098 0-9.57-4.172-9.714-11.114h3.047c.1 5.096 2.352 7.254 4.13 7.7V7.88h2.888v4.395c1.76-.19 3.598-2.192 4.221-4.395h2.888c-.48 2.717-2.49 4.718-3.921 5.54 1.43.665 3.72 2.408 4.591 5.574h-3.178c-.68-2.118-2.375-3.757-4.601-3.98v3.98h-.351z" fill="#fff"/></svg>
<div class="t" style="left:676px;top:740.5px;font-size:14px;color:#1f2329;font-weight:400;letter-spacing:0.45px;">285 ₽</div>
<div class="t" style="left:1089px;top:740.5px;font-size:14px;color:#1f2329;font-weight:400;letter-spacing:0px;">1</div>
<div class="a" style="left:776px;top:728.5px;width:260px;height:40px;border:1px solid #e3e7ee;border-radius:9px;background:#fff"></div>
<div class="t" style="left:793.5px;top:740.5px;font-size:14px;color:#80868f;font-weight:400;letter-spacing:0.1px;">Введите имя тега</div>
<svg class="a" style="left:1045px;top:744.5px" width="12" height="8" viewBox="0 0 12 8"><path d="M1.5 1.8 L6 6.2 L10.5 1.8" fill="none" stroke="#1a66e0" stroke-width="1.9" stroke-linecap="round" stroke-linejoin="round"/></svg>
<div class="a" style="left:254px;top:272.5px;width:1320px;height:2px;background:rgba(20,35,70,0.068)"></div>
<div class="a" style="left:254px;top:322.5px;width:1320px;height:2px;background:rgba(20,35,70,0.068)"></div>
<div class="a" style="left:254px;top:372.5px;width:1320px;height:2px;background:rgba(20,35,70,0.068)"></div>
<div class="a" style="left:254px;top:422.5px;width:1320px;height:2px;background:rgba(20,35,70,0.068)"></div>
<div class="a" style="left:254px;top:522.5px;width:1320px;height:2px;background:rgba(20,35,70,0.068)"></div>
<div class="a" style="left:619px;top:472.5px;width:144px;height:2px;background:rgba(20,35,70,0.068)"></div>
<div class="a" style="left:1076px;top:472.5px;width:208px;height:2px;background:rgba(20,35,70,0.068)"></div>
<div class="a" style="left:254px;top:622.5px;width:1320px;height:2px;background:rgba(20,35,70,0.068)"></div>
<div class="a" style="left:619px;top:572.5px;width:144px;height:2px;background:rgba(20,35,70,0.068)"></div>
<div class="a" style="left:1076px;top:572.5px;width:208px;height:2px;background:rgba(20,35,70,0.068)"></div>
<div class="a" style="left:254px;top:722.5px;width:1320px;height:2px;background:rgba(20,35,70,0.068)"></div>
<div class="a" style="left:619px;top:672.5px;width:144px;height:2px;background:rgba(20,35,70,0.068)"></div>
<div class="a" style="left:1076px;top:672.5px;width:208px;height:2px;background:rgba(20,35,70,0.068)"></div>
<div class="a" style="left:254px;top:772.5px;width:1320px;height:2px;background:rgba(20,35,70,0.068)"></div>
<div class="a" style="left:307px;top:230px;width:1px;height:520px;background:#e5e8ed"></div>
<div class="a" style="left:567px;top:230px;width:1px;height:520px;background:#e5e8ed"></div>
<div class="a" style="left:618px;top:230px;width:1px;height:520px;background:#e5e8ed"></div>
<div class="a" style="left:763px;top:230px;width:1px;height:520px;background:#e5e8ed"></div>
<div class="a" style="left:1075px;top:230px;width:1px;height:520px;background:#e5e8ed"></div>
<div class="a" style="left:1284px;top:230px;width:1px;height:520px;background:#e5e8ed"></div>
<div class="a" style="left:1409px;top:230px;width:1px;height:520px;background:#e5e8ed"></div>
<div class="a" style="left:1513px;top:230px;width:1px;height:520px;background:#e5e8ed"></div>
<div class="a" style="left:254px;top:144px;width:1320px;height:87px;background:#fff;border-bottom:1px solid #e5e8ed"></div>
<div class="a" style="left:1285px;top:144px;width:300px;height:34px;background:#f6f7fa;border-bottom:1px solid #e5e8ed"></div>
<div class="a" style="left:307px;top:145px;width:1px;height:85px;background:#e5e8ed"></div>
<div class="a" style="left:567px;top:145px;width:1px;height:85px;background:#e5e8ed"></div>
<div class="a" style="left:618px;top:145px;width:1px;height:85px;background:#e5e8ed"></div>
<div class="a" style="left:670px;top:145px;width:1px;height:85px;background:#e5e8ed"></div>
<div class="a" style="left:763px;top:145px;width:1px;height:85px;background:#e5e8ed"></div>
<div class="a" style="left:1075px;top:145px;width:1px;height:85px;background:#e5e8ed"></div>
<div class="a" style="left:1284px;top:145px;width:1px;height:85px;background:#e5e8ed"></div>
<div class="a" style="left:1409px;top:178px;width:1px;height:52px;background:#e5e8ed"></div>
<div class="a" style="left:1513px;top:178px;width:1px;height:52px;background:#e5e8ed"></div>
<div class="a" style="left:272px;top:178.5px;width:16px;height:16px;border:1.5px solid #d9dee7;border-radius:3px;background:#fff"></div>
<div class="a" style="left:324px;top:170px;width:197px;height:34px;border:1px solid #e3e7ee;border-radius:10px;background:#fff"></div>
<div class="t" style="left:337.5px;top:178.5px;font-size:14px;color:#858b94;font-weight:400;letter-spacing:0.3px;">Паблик</div>
<svg class="a" style="left:496px;top:180px" width="15" height="15" viewBox="0 0 15 15"><circle cx="6.4" cy="6.4" r="5" fill="none" stroke="#8f959e" stroke-width="1.4"/><path d="M10.2 10.2 L13.6 13.6" stroke="#8f959e" stroke-width="1.5" stroke-linecap="round"/></svg>
<svg class="a" style="left:533.5px;top:181.5px" width="13" height="13" viewBox="0 0 13 13"><path d="M1.2 1.5 H11.8 L7.6 6.6 V11.6 L5.4 10.6 V6.6 Z" fill="none" stroke="#1a4fc0" stroke-width="1.6" stroke-linejoin="round"/></svg>
<svg class="a" style="left:584px;top:177.5px" width="19" height="19" viewBox="0 0 19 19"><path d="M9.5 1.6 L11.8 6.8 L17.4 7.3 L13.2 11 L14.4 16.6 L9.5 13.7 L4.6 16.6 L5.8 11 L1.6 7.3 L7.2 6.8 Z" fill="none" stroke="#1a5fd6" stroke-width="1.6" stroke-linejoin="round"/></svg>
<svg class="a" style="left:635px;top:178px" width="19" height="19" viewBox="0 0 19 19"><g fill="none" stroke="#1a5fd6" stroke-width="1.5" stroke-linecap="round"><path d="M15.8 8.2 A7.2 7.2 0 1 0 8.6 15.9"/><path d="M12.6 8.6 A4.1 4.1 0 1 0 8.5 12.7"/></g><path d="M8.8 8.6 L17.6 11.7 L13.9 13.1 L12.6 17 Z" fill="#fff" stroke="#1a5fd6" stroke-width="1.4" stroke-linejoin="round"/></svg>
<div class="a" style="left:670px;top:170px;width:20px;height:30px;overflow:hidden"><div class="t" style="left:-1px;top:8.5px;font-size:14px;color:#1f2329">на</div></div>
<svg class="a" style="left:692.5px;top:179.5px" width="11" height="16" viewBox="0 0 11 16"><path d="M2.2 4.6 L5.5 1.4 L8.8 4.6" fill="none" stroke="#c8ccd2" stroke-width="1.4" stroke-linecap="round" stroke-linejoin="round"/><path d="M2.2 10.4 L5.5 13.6 L8.8 10.4" fill="none" stroke="#1a5fd6" stroke-width="1.4" stroke-linecap="round" stroke-linejoin="round"/></svg>
<svg class="a" style="left:733px;top:181.5px" width="13" height="13" viewBox="0 0 13 13"><path d="M1.2 1.5 H11.8 L7.6 6.6 V11.6 L5.4 10.6 V6.6 Z" fill="none" stroke="#1a4fc0" stroke-width="1.6" stroke-linejoin="round"/></svg>
<div class="t" style="left:777px;top:178.5px;font-size:14px;color:#1f2329;font-weight:400;letter-spacing:0.1px;">Теги</div>
<svg class="a" style="left:813.5px;top:179.5px" width="11" height="16" viewBox="0 0 11 16"><path d="M2.2 4.6 L5.5 1.4 L8.8 4.6" fill="none" stroke="#c8ccd2" stroke-width="1.4" stroke-linecap="round" stroke-linejoin="round"/><path d="M2.2 10.4 L5.5 13.6 L8.8 10.4" fill="none" stroke="#c8ccd2" stroke-width="1.4" stroke-linecap="round" stroke-linejoin="round"/></svg>
<svg class="a" style="left:835px;top:181.5px" width="13" height="13" viewBox="0 0 13 13"><path d="M1.2 1.5 H11.8 L7.6 6.6 V11.6 L5.4 10.6 V6.6 Z" fill="none" stroke="#1a4fc0" stroke-width="1.6" stroke-linejoin="round"/></svg>
<div class="a" style="left:1087px;top:163px;width:40px;height:12px;border-radius:6px;background:#fdecee"></div>
<div class="t" style="left:1091px;top:163.5px;font-size:8.8px;line-height:11px;color:#d4303f">Трекинг</div>
<div class="t" style="left:1089px;top:178.5px;font-size:14px;color:#1f2329;font-weight:400;letter-spacing:0.4px;">Срок размещения</div>
<svg class="a" style="left:1219.5px;top:179.5px" width="11" height="16" viewBox="0 0 11 16"><path d="M2.2 4.6 L5.5 1.4 L8.8 4.6" fill="none" stroke="#c8ccd2" stroke-width="1.4" stroke-linecap="round" stroke-linejoin="round"/><path d="M2.2 10.4 L5.5 13.6 L8.8 10.4" fill="none" stroke="#c8ccd2" stroke-width="1.4" stroke-linecap="round" stroke-linejoin="round"/></svg>
<div class="t" style="left:1526.5px;top:195.5px;font-size:14px;color:#1f2329;font-weight:400;letter-spacing:0.75px;">Возраст</div>
</div></div>
<div class="a" style="left:1574px;top:144px;width:10px;height:592px;background:#eef0f3"></div>
<svg class="a" style="left:1575px;top:146px" width="8" height="8" viewBox="0 0 8 8"><path d="M0.8 6.5 L4 2.2 L7.2 6.5 Z" fill="#c3c7cd"/></svg>
<div class="a" style="left:1576px;top:167px;width:6px;height:60px;border-radius:3px;background:#c2c6cc"></div>
<svg class="a" style="left:1575px;top:727px" width="8" height="8" viewBox="0 0 8 8"><path d="M0.8 1.5 L4 5.8 L7.2 1.5 Z" fill="#c3c7cd"/></svg>
<div class="a" style="left:254px;top:736px;width:1330px;height:11px;background:#f0f1f4;border-radius:0 0 0 6px"></div>
<svg class="a" style="left:256px;top:737.5px" width="8" height="9" viewBox="0 0 8 9"><path d="M6.8 0.6 L1.4 4.5 L6.8 8.4 Z" fill="#b9c0c9"/></svg>
<div class="a" style="left:438px;top:739px;width:374px;height:5.5px;border-radius:3px;background:#c2c6cc"></div>
<svg class="a" style="left:1564px;top:738px" width="8" height="8" viewBox="0 0 8 8"><path d="M1.5 0.8 L5.8 4 L1.5 7.2 Z" fill="#c3c7cd"/></svg>
<div class="a" style="left:1252px;top:125px;width:282px;height:464px;background:#fff;border-radius:11px;box-shadow:0 2px 10px rgba(20,30,50,0.10),0 0 1px rgba(20,30,50,0.10)">
<div class="a" style="left:-1252px;top:-125px;width:1600px;height:772px">
<div class="t" style="left:1264.5px;top:135px;font-size:19px;color:#14171c;font-weight:700;letter-spacing:0px;line-height:20px">Теги</div>
<svg class="a" style="left:1506px;top:135px" width="13" height="13" viewBox="0 0 13 13"><path d="M1.5 1.5 L11.5 11.5 M11.5 1.5 L1.5 11.5" stroke="#1f2329" stroke-width="1.6" stroke-linecap="round"/></svg>
<div class="t" style="left:1264.5px;top:163.5px;font-size:14px;line-height:21px;color:#80868f;letter-spacing:0.05px">Создание, добавление и удаление</div>
<div class="t" style="left:1264.5px;top:184.5px;font-size:14px;line-height:21px;color:#80868f;letter-spacing:0.05px">тегов для сообщества</div>
<div class="a" style="left:1264px;top:213.5px;width:258px;height:33px;border:1px solid #e3e7ee;border-radius:10px;background:#fff"></div>
<div class="t" style="left:1277.5px;top:222px;font-size:14px;color:#80868f;font-weight:400;letter-spacing:0.1px;">Введите имя тега</div>
<svg class="a" style="left:1268px;top:281px" width="8" height="14" viewBox="0 0 8 14"><g fill="#c6cbd3"><circle cx="2" cy="1.6" r="1.25"/><circle cx="2" cy="7" r="1.25"/><circle cx="2" cy="12.4" r="1.25"/><circle cx="6.5" cy="1.6" r="1.25"/><circle cx="6.5" cy="7" r="1.25"/><circle cx="6.5" cy="12.4" r="1.25"/></g></svg>
<svg class="a" style="left:1288px;top:280px" width="17" height="17" viewBox="0 0 17 17"><circle cx="8.5" cy="8.5" r="7.3" fill="none" stroke="#e8173a" stroke-width="1.6"/><path d="M4.8 8.5 H12.2" stroke="#e8173a" stroke-width="1.6"/></svg>
<div class="a" style="left:1313px;top:272px;width:184px;height:33px;border:1px solid #e3e7ee;border-radius:9px;background:#fff"></div>
<div class="t" style="left:1326.5px;top:280.5px;font-size:14px;color:#4a505b;font-weight:400;letter-spacing:0.33px;">Прямые конкуренты</div>
<svg class="a" style="left:1507px;top:282.5px" width="12" height="12" viewBox="0 0 12 12"><path d="M1.6 1.6 L10.4 10.4 M10.4 1.6 L1.6 10.4" stroke="#6b717b" stroke-width="1.5" stroke-linecap="round"/></svg>
<svg class="a" style="left:1268px;top:322.5px" width="8" height="14" viewBox="0 0 8 14"><g fill="#c6cbd3"><circle cx="2" cy="1.6" r="1.25"/><circle cx="2" cy="7" r="1.25"/><circle cx="2" cy="12.4" r="1.25"/><circle cx="6.5" cy="1.6" r="1.25"/><circle cx="6.5" cy="7" r="1.25"/><circle cx="6.5" cy="12.4" r="1.25"/></g></svg>
<svg class="a" style="left:1288px;top:321.5px" width="17" height="17" viewBox="0 0 17 17"><circle cx="8.5" cy="8.5" r="7.3" fill="none" stroke="#e8173a" stroke-width="1.6"/><path d="M4.8 8.5 H12.2" stroke="#e8173a" stroke-width="1.6"/></svg>
<div class="a" style="left:1313px;top:313.5px;width:184px;height:33px;border:1px solid #e3e7ee;border-radius:9px;background:#fff"></div>
<div class="t" style="left:1326.5px;top:322.0px;font-size:14px;color:#4a505b;font-weight:400;letter-spacing:0.33px;">Косвенные конкуренты</div>
<svg class="a" style="left:1507px;top:324.0px" width="12" height="12" viewBox="0 0 12 12"><path d="M1.6 1.6 L10.4 10.4 M10.4 1.6 L1.6 10.4" stroke="#6b717b" stroke-width="1.5" stroke-linecap="round"/></svg>
<svg class="a" style="left:1268px;top:364px" width="8" height="14" viewBox="0 0 8 14"><g fill="#c6cbd3"><circle cx="2" cy="1.6" r="1.25"/><circle cx="2" cy="7" r="1.25"/><circle cx="2" cy="12.4" r="1.25"/><circle cx="6.5" cy="1.6" r="1.25"/><circle cx="6.5" cy="7" r="1.25"/><circle cx="6.5" cy="12.4" r="1.25"/></g></svg>
<svg class="a" style="left:1288px;top:363px" width="17" height="17" viewBox="0 0 17 17"><circle cx="8.5" cy="8.5" r="7.3" fill="none" stroke="#e8173a" stroke-width="1.6"/><path d="M4.8 8.5 H12.2" stroke="#e8173a" stroke-width="1.6"/></svg>
<div class="a" style="left:1313px;top:355px;width:184px;height:33px;border:1px solid #e3e7ee;border-radius:9px;background:#fff"></div>
<div class="t" style="left:1326.5px;top:363.5px;font-size:14px;color:#4a505b;font-weight:400;letter-spacing:0.33px;">Не публиковать</div>
<svg class="a" style="left:1507px;top:365.5px" width="12" height="12" viewBox="0 0 12 12"><path d="M1.6 1.6 L10.4 10.4 M10.4 1.6 L1.6 10.4" stroke="#6b717b" stroke-width="1.5" stroke-linecap="round"/></svg>
<svg class="a" style="left:1268px;top:423px" width="8" height="14" viewBox="0 0 8 14"><g fill="#c6cbd3"><circle cx="2" cy="1.6" r="1.25"/><circle cx="2" cy="7" r="1.25"/><circle cx="2" cy="12.4" r="1.25"/><circle cx="6.5" cy="1.6" r="1.25"/><circle cx="6.5" cy="7" r="1.25"/><circle cx="6.5" cy="12.4" r="1.25"/></g></svg>
<svg class="a" style="left:1288px;top:422px" width="17" height="17" viewBox="0 0 17 17"><circle cx="8.5" cy="8.5" r="7.3" fill="none" stroke="#1a66e0" stroke-width="1.6"/><path d="M4.8 8.5 H12.2 M8.5 4.8 V12.2" stroke="#1a66e0" stroke-width="1.6"/></svg>
<div class="a" style="left:1313px;top:414px;width:184px;height:33px;border:1px solid #e3e7ee;border-radius:9px;background:#fff"></div>
<div class="t" style="left:1326.5px;top:422.5px;font-size:14px;color:#4a505b;font-weight:400;letter-spacing:0.33px;">тестапе</div>
<svg class="a" style="left:1507px;top:424.5px" width="12" height="12" viewBox="0 0 12 12"><path d="M1.6 1.6 L10.4 10.4 M10.4 1.6 L1.6 10.4" stroke="#6b717b" stroke-width="1.5" stroke-linecap="round"/></svg>
<svg class="a" style="left:1268px;top:464.5px" width="8" height="14" viewBox="0 0 8 14"><g fill="#c6cbd3"><circle cx="2" cy="1.6" r="1.25"/><circle cx="2" cy="7" r="1.25"/><circle cx="2" cy="12.4" r="1.25"/><circle cx="6.5" cy="1.6" r="1.25"/><circle cx="6.5" cy="7" r="1.25"/><circle cx="6.5" cy="12.4" r="1.25"/></g></svg>
<svg class="a" style="left:1288px;top:463.5px" width="17" height="17" viewBox="0 0 17 17"><circle cx="8.5" cy="8.5" r="7.3" fill="none" stroke="#1a66e0" stroke-width="1.6"/><path d="M4.8 8.5 H12.2 M8.5 4.8 V12.2" stroke="#1a66e0" stroke-width="1.6"/></svg>
<div class="a" style="left:1313px;top:455.5px;width:184px;height:33px;border:1px solid #e3e7ee;border-radius:9px;background:#fff"></div>
<div class="t" style="left:1326.5px;top:464.0px;font-size:14px;color:#4a505b;font-weight:400;letter-spacing:0.33px;">новый тег</div>
<svg class="a" style="left:1507px;top:466.0px" width="12" height="12" viewBox="0 0 12 12"><path d="M1.6 1.6 L10.4 10.4 M10.4 1.6 L1.6 10.4" stroke="#6b717b" stroke-width="1.5" stroke-linecap="round"/></svg>
<div class="t" style="left:1377.5px;top:504.5px;font-size:14px;color:#e8173a;font-weight:400;letter-spacing:0.32px;">Удалить все теги</div>
<svg class="a" style="left:1501px;top:505px" width="16" height="17" viewBox="0 0 16 17"><path d="M1.5 3.8 H14.5 M5.5 3.8 V1.8 H10.5 V3.8 M3.2 3.8 L4 15.2 H12 L12.8 3.8" fill="none" stroke="#e8173a" stroke-width="1.6" stroke-linejoin="round" stroke-linecap="round"/></svg>
<div class="a" style="left:1264px;top:538.5px;width:258px;height:41.5px;border-radius:9px;background:#a7c4f0;color:#fff;font-weight:700;font-size:14px;line-height:41px;text-align:center">Создать</div>
</div></div>
<div id="bot" class="a"></div>
</body></html>
